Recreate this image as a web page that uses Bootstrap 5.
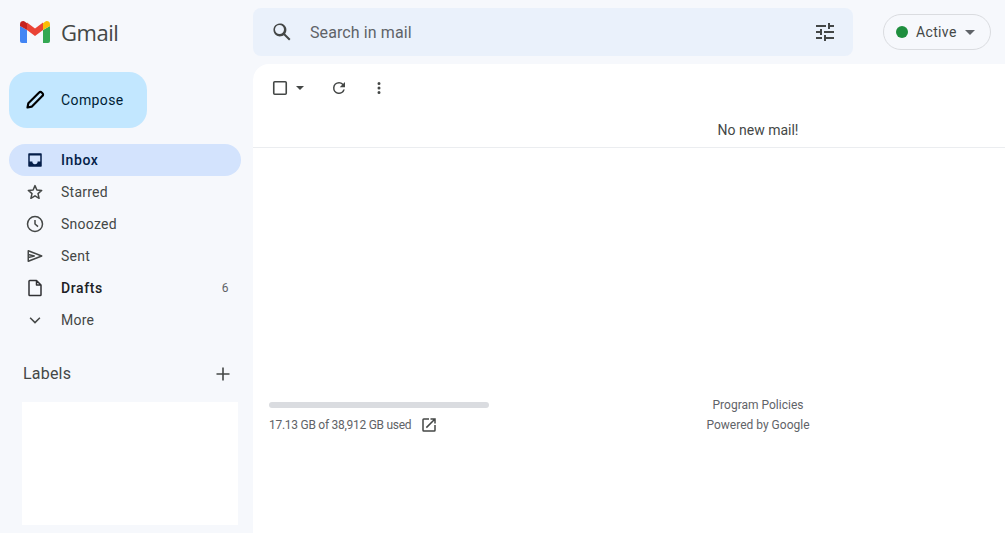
<!DOCTYPE html>
<html lang="en">
<head>
<meta charset="utf-8">
<title>Gmail</title>
<link rel="stylesheet" href="https://cdn.jsdelivr.net/npm/bootstrap@5.3.0/dist/css/bootstrap.min.css">
<style>
html,body{height:100%;}
body{background:#f6f8fc;font-family:Roboto,"Liberation Sans",sans-serif;font-size:14px;color:#444746;overflow:hidden;}
.app-shell{height:533px;width:1005px;}
.top-bar{height:64px;}
.brand-area{width:253px;padding-left:20px;}
.brand-name{font-family:"Open Sans",Roboto,sans-serif;font-size:22px;color:#444746;margin-left:11px;letter-spacing:-.45px;line-height:1;}
.search-box{width:600px;height:48px;background:#eaf1fb;border-radius:8px;padding:0 8px 0 17px;}
.search-text{font-size:16px;color:#5f6368;margin-left:16px;letter-spacing:.1px;padding-top:1px;}
.status-pill{width:108px;height:36px;margin-left:30px;border:1px solid #dadce0;border-radius:18px;padding-left:12px;color:#444746;}
.status-dot{width:12px;height:12px;border-radius:50%;background:#1e8e3e;}
.status-label{margin-left:8px;font-size:14px;letter-spacing:.35px;}
.caret-down{width:0;height:0;border-left:5px solid transparent;border-right:5px solid transparent;border-top:5px solid #5f6368;}
.side-col{width:253px;flex:none;}
.compose-btn{width:138px;height:56px;margin:8px 0 16px 9px;border-radius:18px;background:#c2e7ff;color:#001d35;padding-left:16px;letter-spacing:.4px;}
.compose-btn span{margin-left:16px;}
.nav-line{height:32px;width:232px;margin-left:9px;border-radius:16px;padding:0 12px 0 17px;color:#444746;letter-spacing:.25px;}
.nav-line svg{flex:none;}
.nav-line span.nav-name{margin-left:17px;flex:1;}
.nav-active{background:#d3e3fd;color:#041e49;font-weight:500;letter-spacing:.6px;}
.nav-bold{font-weight:500;color:#202124;letter-spacing:.6px;}
.nav-count{font-size:12px;color:#5f6368;font-weight:400;}
.label-head{height:32px;margin:22px 0 12px 0;padding:0 22px 0 23px;font-size:16px;color:#444746;letter-spacing:.2px;}
.label-panel{width:216px;height:123px;margin-left:22px;background:#fff;}
.mail-pane{background:#fff;border-top-left-radius:16px;flex:1;height:469px;}
.tool-strip{height:48px;padding-left:18px;}
.select-caret{margin-left:7px;border-top-color:#444746;border-left-width:4.5px;border-right-width:4.5px;border-top-width:4.5px;}
.tool-gap-b{margin-left:26px;}
.tool-gap-c{margin-left:22px;}
.empty-row{height:36px;border-bottom:1px solid #ebedf0;color:#444746;padding-top:1px;}
.left-span{width:258px;flex:none;}
.pane-foot{padding-top:254px;color:#5f6368;font-size:12px;}
.quota-col{padding-left:16px;}
.quota-bar{width:220px;height:6px;background:#dadce0;border-radius:3px;}
.quota-line{margin-top:7px;height:20px;letter-spacing:-.27px;}
.quota-icon{margin-left:9px;}
.foot-links{line-height:20px;margin-top:-7px;}
</style>
</head>
<body>
<div class="app-shell d-flex flex-column">
  <header class="top-bar d-flex align-items-center flex-none">
    <div class="brand-area d-flex align-items-center">
      <svg width="30" height="22" viewBox="0 0 30 22" aria-hidden="true">
        <path fill="#4285f4" d="M0 5v15a2 2 0 0 0 2 2h5V9z"/>
        <path fill="#34a853" d="M23 9v13h5a2 2 0 0 0 2-2V5z"/>
        <path fill="#ea4335" d="M7 9V1.5l8 6 8-6V9l-8 6z"/>
        <path fill="#c5221f" d="M0 3.2C0 .6 3 -.8 5 .7l2 1.5V9L0 5z"/>
        <path fill="#fbbc04" d="M23 2.2 25 .7c2-1.5 5-.1 5 2.5V5l-7 4z"/>
      </svg>
      <span class="brand-name">Gmail</span>
    </div>
    <div class="search-box d-flex align-items-center">
      <svg width="24" height="24" viewBox="0 0 24 24" aria-hidden="true"><path fill="#444746" d="M20.49 19.07 15.17 13.75A6.5 6.5 0 1 0 13.75 15.17L19.07 20.49ZM9.5 14a4.5 4.5 0 1 1 0-9 4.5 4.5 0 0 1 0 9Z"/></svg>
      <span class="search-text flex-grow-1">Search in mail</span>
      <svg class="me-2" width="24" height="24" viewBox="0 0 24 24" aria-hidden="true"><path fill="#444746" d="M3 17v2h6v-2H3zM3 5v2h10V5H3zm10 16v-2h8v-2h-8v-2h-2v6h2zM7 9v2H3v2h4v2h2V9H7zm14 4v-2H11v2h10zm-6-4h2V7h4V5h-4V3h-2v6z"/></svg>
    </div>
    <div class="status-pill d-flex align-items-center">
      <span class="status-dot"></span>
      <span class="status-label">Active</span>
      <span class="caret-down ms-2"></span>
    </div>
  </header>
  <div class="d-flex flex-grow-1">
    <aside class="side-col">
      <div class="compose-btn d-flex align-items-center">
        <svg width="20" height="20" viewBox="0 0 24 24" aria-hidden="true"><path fill="none" stroke="#000" stroke-width="2.6" stroke-linejoin="round" d="M3 21l1-5L17 3a2 2 0 0 1 3 0l1 1a2 2 0 0 1 0 3L8 20z"/></svg>
        <span>Compose</span>
      </div>
      <div class="nav-line nav-active d-flex align-items-center">
        <svg width="18" height="18" viewBox="0 0 24 24" aria-hidden="true"><path fill="#041e49" fill-rule="evenodd" d="M4 3h16a1 1 0 0 1 1 1v16a1 1 0 0 1-1 1H4a1 1 0 0 1-1-1V4a1 1 0 0 1 1-1zm1 3v8h3.5a3.5 3.5 0 0 0 7 0H19V6z"/></svg>
        <span class="nav-name">Inbox</span>
      </div>
      <div class="nav-line d-flex align-items-center">
        <svg width="18" height="18" viewBox="0 0 24 24" aria-hidden="true"><path fill="none" stroke="#444746" stroke-width="2" stroke-linejoin="round" d="M12 3.5l2.5 5.9 6.4.5-4.9 4.2 1.5 6.3L12 17.1l-5.5 3.3L8 14.1 3.1 9.9l6.4-.5z"/></svg>
        <span class="nav-name">Starred</span>
      </div>
      <div class="nav-line d-flex align-items-center">
        <svg width="18" height="18" viewBox="0 0 24 24" aria-hidden="true"><circle cx="12" cy="12" r="10" fill="none" stroke="#444746" stroke-width="2"/><path fill="none" stroke="#444746" stroke-width="2" d="M12 6.5V12l4 3.5"/></svg>
        <span class="nav-name">Snoozed</span>
      </div>
      <div class="nav-line d-flex align-items-center">
        <svg width="18" height="18" viewBox="0 0 24 24" aria-hidden="true"><path fill="none" stroke="#444746" stroke-width="2" stroke-linejoin="round" d="M3 5v14l18-7zM3 10l8 2-8 2"/></svg>
        <span class="nav-name">Sent</span>
      </div>
      <div class="nav-line nav-bold d-flex align-items-center">
        <svg width="18" height="18" viewBox="0 0 24 24" aria-hidden="true"><path fill="none" stroke="#303134" stroke-width="2" stroke-linejoin="round" d="M4 3a1 1 0 0 1 1-1h9l6 6v13a1 1 0 0 1-1 1H5a1 1 0 0 1-1-1zM14 2v6h6"/></svg>
        <span class="nav-name">Drafts</span>
        <span class="nav-count">6</span>
      </div>
      <div class="nav-line d-flex align-items-center">
        <svg width="18" height="18" viewBox="0 0 24 24" aria-hidden="true"><path fill="none" stroke="#444746" stroke-width="2" d="M5.5 9l6.5 6.5L18.500 9"/></svg>
        <span class="nav-name">More</span>
      </div>
      <div class="label-head d-flex align-items-center justify-content-between">
        <span>Labels</span>
        <svg width="16" height="16" viewBox="0 0 16 16" aria-hidden="true"><path fill="none" stroke="#444746" stroke-width="1.6" d="M8 1.5v13M1.5 8h13"/></svg>
      </div>
      <div class="label-panel"></div>
    </aside>
    <main class="mail-pane">
      <div class="tool-strip d-flex align-items-center">
        <svg width="18" height="18" viewBox="0 0 18 18" aria-hidden="true"><rect x="2.75" y="2.75" width="12.5" height="12.5" rx="1" fill="none" stroke="#444746" stroke-width="1.6"/></svg>
        <span class="caret-down select-caret"></span>
        <svg class="tool-gap-b" width="18" height="18" viewBox="0 0 24 24" aria-hidden="true"><path fill="#444746" d="M17.65 6.35A7.96 7.96 0 0 0 12 4a8 8 0 1 0 7.75 10h-2.09A6 6 0 1 1 12 6c1.66 0 3.14.69 4.22 1.78L13 11h7V4z"/></svg>
        <svg class="tool-gap-c" width="18" height="18" viewBox="0 0 24 24" aria-hidden="true"><path fill="#444746" d="M12 8a2 2 0 1 0 0-4 2 2 0 0 0 0 4zm0 2a2 2 0 1 0 0 4 2 2 0 0 0 0-4zm0 6a2 2 0 1 0 0 4 2 2 0 0 0 0-4z"/></svg>
      </div>
      <div class="empty-row d-flex align-items-center">
        <div class="left-span"></div>
        <div class="flex-grow-1 text-center">No new mail!</div>
      </div>
      <div class="pane-foot d-flex">
        <div class="left-span quota-col">
          <div class="quota-bar"></div>
          <div class="quota-line d-flex align-items-center">
            <span>17.13 GB of 38,912 GB used</span>
            <svg class="quota-icon" width="18" height="18" viewBox="0 0 24 24" aria-hidden="true"><path fill="#444746" d="M19 19H5V5h7V3H5a2 2 0 0 0-2 2v14a2 2 0 0 0 2 2h14a2 2 0 0 0 2-2v-7h-2v7zM14 3v2h3.59l-9.83 9.83 1.41 1.41L19 6.41V10h2V3h-7z"/></svg>
          </div>
        </div>
        <div class="flex-grow-1 text-center foot-links">
          <div>Program Policies</div>
          <div>Powered by Google</div>
        </div>
      </div>
    </main>
  </div>
</div>
<script src="https://cdn.jsdelivr.net/npm/bootstrap@5.3.0/dist/js/bootstrap.bundle.min.js"></script>
</body>
</html>
